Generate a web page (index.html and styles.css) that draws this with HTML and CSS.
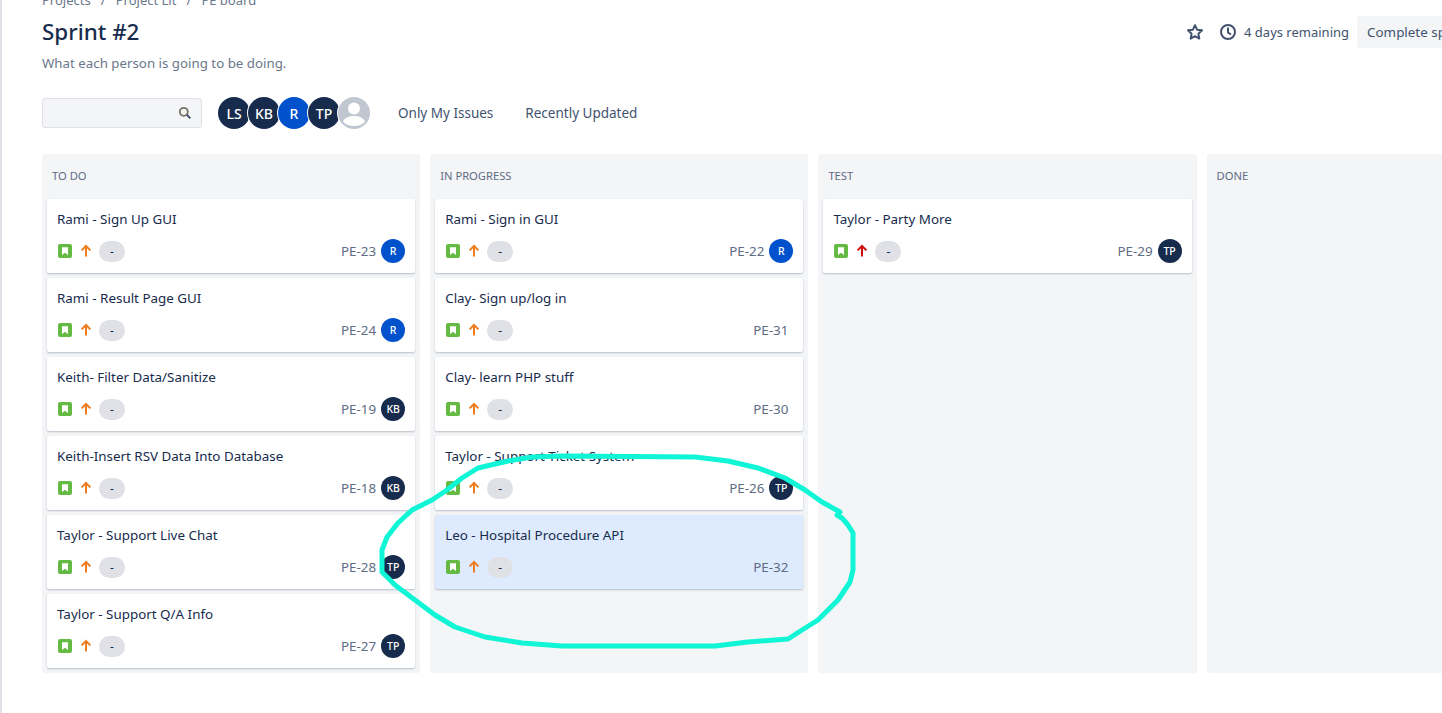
FILE: index.html
```html
<!DOCTYPE html>
<html lang="en">
  <head>
    <meta charset="UTF-8" />
    <meta name="viewport" content="width=device-width, initial-scale=1.0" />
    <title>Sprint #2</title>
    <link rel="stylesheet" href="styles.css">
  </head>
  <body>
    <svg width="0" height="0" class="defs" aria-hidden="true">
      <symbol id="story" viewBox="0 0 14 14">
        <rect width="14" height="14" rx="2" fill="#65ba43" />
        <path d="M4 3.2h6v7.8L7 8.8 4 11z" fill="#fff" />
      </symbol>
      <symbol id="arrow" viewBox="0 0 14 14">
        <path d="M7 12.5V2.2M2.6 6.4 7 2l4.4 4.4" fill="none" stroke="currentColor" stroke-width="2" />
      </symbol>
    </svg>

    <main class="page">
      <nav class="breadcrumbs">
        <span>Projects</span><i>/</i><span>Project Lit</span><i>/</i><span>PE board</span>
      </nav>

      <header class="head">
        <h1>Sprint #2</h1>
        <div class="sprint-actions">
          <svg class="star" width="18" height="18" viewBox="0 0 18 18">
            <path d="M9 2.2l2.1 4.5 4.9.6-3.6 3.4.9 4.9L9 13.2l-4.3 2.4.9-4.9L2 7.3l4.9-.6z" fill="none" stroke="#42526e" stroke-width="2" stroke-linejoin="round" />
          </svg>
          <svg class="clock" width="18" height="18" viewBox="0 0 18 18">
            <circle cx="9" cy="9" r="7" fill="none" stroke="#42526e" stroke-width="2" />
            <path d="M9 4.5V9.5l3 2" fill="none" stroke="#42526e" stroke-width="2" />
          </svg>
          <span class="remaining">4 days remaining</span>
          <button class="complete">Complete sprint</button>
        </div>
      </header>
      <p class="subtitle">What each person is going to be doing.</p>

      <div class="filters">
        <div class="search">
          <svg width="14" height="14" viewBox="0 0 14 14">
            <circle cx="5.8" cy="5.8" r="4" fill="none" stroke="#7a6f63" stroke-width="1.8" />
            <path d="M8.8 8.8l3.6 3.6" stroke="#42526e" stroke-width="2" />
          </svg>
        </div>
        <div class="people">
          <span class="avatar navy">LS</span>
          <span class="avatar navy">KB</span>
          <span class="avatar blue">R</span>
          <span class="avatar navy">TP</span>
          <span class="avatar nobody">
            <svg width="32" height="32" viewBox="0 0 32 32">
              <circle cx="16" cy="11.5" r="6" fill="#fff" />
              <path d="M5 24.5c2-4 6-5.5 11-5.5s9 1.5 11 5.5c-2.5 3-6.5 4.5-11 4.5s-8.5-1.5-11-4.5z" fill="#fff" />
            </svg>
          </span>
        </div>
        <a class="quick">Only My Issues</a>
        <a class="quick">Recently Updated</a>
      </div>

      <section class="board">
        <div class="column">
          <h2>TO DO</h2>
          <article class="card">
            <p>Rami - Sign Up GUI</p>
            <div class="meta">
              <svg class="type"><use href="#story" /></svg>
              <svg class="prio high"><use href="#arrow" /></svg>
              <span class="tag">-</span>
              <span class="key">PE-23</span>
              <span class="avatar small blue">R</span>
            </div>
          </article>
          <article class="card">
            <p>Rami - Result Page GUI</p>
            <div class="meta">
              <svg class="type"><use href="#story" /></svg>
              <svg class="prio high"><use href="#arrow" /></svg>
              <span class="tag">-</span>
              <span class="key">PE-24</span>
              <span class="avatar small blue">R</span>
            </div>
          </article>
          <article class="card">
            <p>Keith- Filter Data/Sanitize</p>
            <div class="meta">
              <svg class="type"><use href="#story" /></svg>
              <svg class="prio high"><use href="#arrow" /></svg>
              <span class="tag">-</span>
              <span class="key">PE-19</span>
              <span class="avatar small navy">KB</span>
            </div>
          </article>
          <article class="card">
            <p>Keith-Insert RSV Data Into Database</p>
            <div class="meta">
              <svg class="type"><use href="#story" /></svg>
              <svg class="prio high"><use href="#arrow" /></svg>
              <span class="tag">-</span>
              <span class="key">PE-18</span>
              <span class="avatar small navy">KB</span>
            </div>
          </article>
          <article class="card">
            <p>Taylor - Support Live Chat</p>
            <div class="meta">
              <svg class="type"><use href="#story" /></svg>
              <svg class="prio high"><use href="#arrow" /></svg>
              <span class="tag">-</span>
              <span class="key">PE-28</span>
              <span class="avatar small navy">TP</span>
            </div>
          </article>
          <article class="card">
            <p>Taylor - Support Q/A Info</p>
            <div class="meta">
              <svg class="type"><use href="#story" /></svg>
              <svg class="prio high"><use href="#arrow" /></svg>
              <span class="tag">-</span>
              <span class="key">PE-27</span>
              <span class="avatar small navy">TP</span>
            </div>
          </article>
        </div>

        <div class="column">
          <h2>IN PROGRESS</h2>
          <article class="card">
            <p>Rami - Sign in GUI</p>
            <div class="meta">
              <svg class="type"><use href="#story" /></svg>
              <svg class="prio high"><use href="#arrow" /></svg>
              <span class="tag">-</span>
              <span class="key">PE-22</span>
              <span class="avatar small blue">R</span>
            </div>
          </article>
          <article class="card">
            <p>Clay- Sign up/log in</p>
            <div class="meta">
              <svg class="type"><use href="#story" /></svg>
              <svg class="prio high"><use href="#arrow" /></svg>
              <span class="tag">-</span>
              <span class="key no-owner">PE-31</span>
            </div>
          </article>
          <article class="card">
            <p>Clay- learn PHP stuff</p>
            <div class="meta">
              <svg class="type"><use href="#story" /></svg>
              <svg class="prio high"><use href="#arrow" /></svg>
              <span class="tag">-</span>
              <span class="key no-owner">PE-30</span>
            </div>
          </article>
          <article class="card">
            <p>Taylor - Support Ticket System</p>
            <div class="meta">
              <svg class="type"><use href="#story" /></svg>
              <svg class="prio high"><use href="#arrow" /></svg>
              <span class="tag">-</span>
              <span class="key">PE-26</span>
              <span class="avatar small navy">TP</span>
            </div>
          </article>
          <article class="card selected">
            <p>Leo - Hospital Procedure API</p>
            <div class="meta">
              <svg class="type"><use href="#story" /></svg>
              <svg class="prio high"><use href="#arrow" /></svg>
              <span class="tag">-</span>
              <span class="key no-owner">PE-32</span>
            </div>
          </article>
        </div>

        <div class="column">
          <h2>TEST</h2>
          <article class="card">
            <p>Taylor - Party More</p>
            <div class="meta">
              <svg class="type"><use href="#story" /></svg>
              <svg class="prio highest"><use href="#arrow" /></svg>
              <span class="tag">-</span>
              <span class="key">PE-29</span>
              <span class="avatar small navy">TP</span>
            </div>
          </article>
        </div>

        <div class="column">
          <h2>DONE</h2>
        </div>
      </section>
    </main>

    <!-- hand drawn circle on top of the screenshot -->
    <svg class="scribble" width="1442" height="713" viewBox="0 0 1442 713" aria-hidden="true">
      <path d="M562 456 L532 457 L508 461 L478 468 L462 478 L447 490 L432 500 L412 510 L398 523 L387 537 L382 550 L382 572 L395 585 L415 600 L435 615 L455 627 L485 637 L522 643 L562 646 L715 646 L748 642 L788 639 L802 630 L818 620 L838 600 L850 582 L853 570 L853 533 L848 525 L842 518 L837 515 L840 512 L822 502 L805 490 L785 478 L758 468 L728 461 L695 457 Z" />
    </svg>
  </body>
</html>
```

FILE: styles.css
```css
html,
body {
  margin: 0;
  height: 100%;
  overflow: hidden;
  background-color: #fff;
}
body {
  color: #172b4d;
  font-size: 13.4px;
  font-family: "Noto Sans", sans-serif;
  border-left: 2px solid #dfe1e6;
  box-sizing: border-box;
}
.defs {
  display: block;
}
.page {
  width: 1440px;
  margin-top: -11px;
  padding-left: 40px;
  box-sizing: border-box;
}
.breadcrumbs {
  display: flex;
  height: 20px;
  color: #6b778c;
  font-size: 13px;
  line-height: 22px;
}
.breadcrumbs i {
  width: 25px;
  font-style: normal;
  text-align: center;
}
.head {
  display: flex;
  height: 40px;
  margin-top: 3px;
  align-items: center;
  justify-content: space-between;
}
.head h1 {
  margin: 0;
  font-size: 22.4px;
  font-weight: 500;
  line-height: 32px;
}
.sprint-actions {
  display: flex;
  color: #42526e;
  align-items: center;
  margin-right: -36px;
}
.sprint-actions .clock {
  margin-left: 15px;
}
.remaining {
  font-size: 13px;
  margin-left: 7px;
}
.complete {
  height: 32px;
  border: none;
  color: #42526e;
  font: inherit;
  padding: 0 10px;
  margin-left: 8px;
  border-radius: 3px;
  white-space: nowrap;
  background-color: #f4f5f7;
}
.subtitle {
  margin: 1px 0 0;
  color: #6b778c;
  font-size: 13.3px;
  line-height: 20px;
}
.filters {
  display: flex;
  margin-top: 24px;
  align-items: center;
}
.search {
  width: 160px;
  height: 30px;
  display: flex;
  padding-right: 9px;
  border-radius: 3px;
  align-items: center;
  box-sizing: border-box;
  justify-content: flex-end;
  background-color: #f4f5f7;
  border: 1px solid #dfe1e6;
}
.people {
  display: flex;
  margin: 0 12px 0 16px;
}
.avatar {
  width: 32px;
  height: 32px;
  color: #fff;
  display: flex;
  flex: none;
  font-size: 14px;
  font-weight: 500;
  overflow: hidden;
  border-radius: 50%;
  align-items: center;
  justify-content: center;
}
.people .avatar {
  box-shadow: 0 0 0 1px #fff;
}
.people .avatar + .avatar {
  margin-left: -2px;
}
.navy {
  background-color: #172b4d;
}
.blue {
  background-color: #0052cc;
}
.nobody {
  background-color: #c1c7d0;
}
.avatar.small {
  width: 24px;
  height: 24px;
  font-size: 10.5px;
  margin-left: 5px;
}
.quick {
  color: #42526e;
  font-size: 13.5px;
  padding: 0 16px;
  line-height: 32px;
}
.board {
  display: flex;
  gap: 10px;
  margin-top: 25px;
}
.column {
  flex: none;
  width: 378.2px;
  height: 519px;
  padding: 0 5px;
  border-radius: 3px;
  box-sizing: border-box;
  background-color: #f4f5f7;
}
.column h2 {
  margin: 0;
  height: 45px;
  color: #5e6c84;
  font-size: 11.2px;
  font-weight: 400;
  padding-left: 5px;
  line-height: 44px;
}
.card {
  height: 74px;
  padding: 10px;
  margin-bottom: 5px;
  border-radius: 2px;
  box-sizing: border-box;
  background-color: #fff;
  box-shadow: 0 1px 2px rgba(9, 30, 66, 0.25);
}
.card.selected {
  background-color: #deebff;
}
.card p {
  margin: 0;
  line-height: 20px;
}
.meta {
  display: flex;
  height: 24px;
  margin-top: 10px;
  align-items: center;
}
.type {
  width: 14px;
  height: 14px;
  margin-left: 1px;
}
.prio {
  width: 14px;
  height: 14px;
  margin-left: 7px;
}
.high {
  color: #ed7d1f;
}
.highest {
  color: #cd0f0f;
}
.tag {
  width: 26px;
  height: 21px;
  font-size: 12px;
  margin-left: 6px;
  line-height: 21px;
  text-align: center;
  border-radius: 11px;
  background-color: #dfe1e6;
}
.key {
  color: #5e6c84;
  margin-left: auto;
}
.key.no-owner {
  margin-right: 5px;
}
.scribble {
  top: 0;
  left: 0;
  position: absolute;
}
.scribble path {
  fill: none;
  stroke: #0ff5d5;
  stroke-width: 5;
  stroke-linejoin: round;
}
```
